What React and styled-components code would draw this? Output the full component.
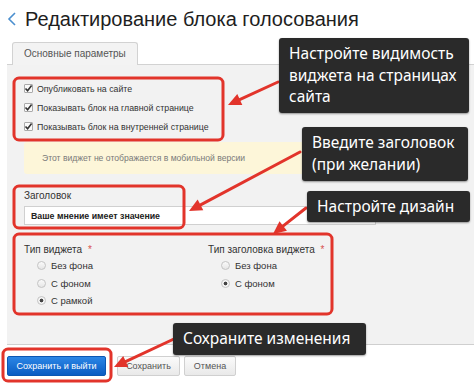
import React from 'react';
import styled, { createGlobalStyle } from 'styled-components';

const GlobalStyle = createGlobalStyle`
  html, body { margin: 0; padding: 0; background: #fff; }
  body { font-family: "Liberation Sans", Arial, sans-serif; }
`;

const RED = '#e2342b';

const checks = [
  'Опубликовать на сайте',
  'Показывать блок на главной странице',
  'Показывать блок на внутренней странице',
];

const boxes = [
  { x: 14, y: 78, w: 209, h: 62 },
  { x: 14, y: 186, w: 170, h: 42 },
  { x: 14, y: 234, w: 318, h: 80 },
  { x: 3, y: 349, w: 108, h: 32 },
];

const arrows = [
  { x1: 278, y1: 82, x2: 228, y2: 105 },
  { x1: 300, y1: 152, x2: 189, y2: 211 },
  { x1: 306, y1: 208, x2: 273, y2: 234 },
  { x1: 176, y1: 338, x2: 114, y2: 367 },
];

const callouts = [
  { x: 279, y: 38, w: 190, h: 75, text: 'Настройте видимость\nвиджета на страницах\nсайта' },
  { x: 302, y: 127, w: 166, h: 54, text: 'Введите заголовок\n(при желании)' },
  { x: 307, y: 191, w: 163, h: 31, text: 'Настройте дизайн' },
  { x: 173, y: 323, w: 193, h: 32, text: 'Сохраните изменения' },
];

function Arrow({ x1, y1, x2, y2 }) {
  const dx = x2 - x1, dy = y2 - y1;
  const len = Math.hypot(dx, dy);
  const ux = dx / len, uy = dy / len;
  const hl = 13, hw = 6;
  const bx = x2 - ux * hl, by = y2 - uy * hl;
  const pts = [
    `${x2},${y2}`,
    `${bx - uy * hw},${by + ux * hw}`,
    `${bx + uy * hw},${by - ux * hw}`,
  ].join(' ');
  return (
    <g>
      <line x1={x1} y1={y1} x2={bx + ux * 2} y2={by + uy * 2} stroke={RED} strokeWidth="3" strokeLinecap="round" />
      <polygon points={pts} fill={RED} />
    </g>
  );
}

function CheckBox() {
  return (
    <Box>
      <svg width="9" height="9" viewBox="0 0 9 9">
        <path d="M1.5 4.5 L3.6 6.8 L7.6 1.6" fill="none" stroke="#333" strokeWidth="1.6" />
      </svg>
    </Box>
  );
}

function Radio({ checked, label }) {
  return (
    <RadioRow>
      <Circle $checked={checked} />
      {label}
    </RadioRow>
  );
}

export default function App() {
  return (
    <Page>
      <GlobalStyle />
      <Header>
        <svg width="10" height="16" viewBox="0 0 10 16">
          <path d="M8 2 L2 8 L8 14" fill="none" stroke="#4b8fcf" strokeWidth="1.6" />
        </svg>
        <Title>Редактирование блока голосования</Title>
      </Header>

      <Main>
        <TabBar>
          <Tab>Основные параметры</Tab>
        </TabBar>
        <Panel>
          <Checks>
            {checks.map((c) => (
              <CheckRow key={c}>
                <CheckBox />
                {c}
              </CheckRow>
            ))}
          </Checks>

          <Notice>Этот виджет не отображается в мобильной версии</Notice>

          <Label>Заголовок</Label>
          <Input>Ваше мнение имеет значение</Input>

          <Design>
            <Column>
              <Label $top={18}>Тип виджета <Req>*</Req></Label>
              <Radio label="Без фона" />
              <Radio label="С фоном" />
              <Radio label="С рамкой" checked />
            </Column>
            <Column>
              <Label $top={18}>Тип заголовка виджета <Req>*</Req></Label>
              <Radio label="Без фона" />
              <Radio label="С фоном" checked />
            </Column>
          </Design>
        </Panel>
      </Main>

      <Footer>
        <Button $primary $w={99}>Сохранить и выйти</Button>
        <Button $w={63} $gap={11}>Сохранить</Button>
        <Button $w={52} $gap={4}>Отмена</Button>
      </Footer>

      <Overlay width="474" height="384" viewBox="0 0 474 384">
        {boxes.map((b, i) => (
          <rect key={i} x={b.x} y={b.y} width={b.w} height={b.h} rx="5" fill="none" stroke={RED} strokeWidth="3" />
        ))}
        {arrows.map((a, i) => <Arrow key={i} {...a} />)}
      </Overlay>

      {callouts.map((c, i) => (
        <Callout key={i} $x={c.x} $y={c.y} $w={c.w} $h={c.h}>
          {c.text}
        </Callout>
      ))}
    </Page>
  );
}

const Page = styled.div`
  position: relative;
  width: 474px;
  height: 384px;
  overflow: hidden;
  background: #fff;
`;

const Header = styled.div`
  display: flex;
  align-items: center;
  gap: 8px;
  height: 38px;
  padding: 0 0 0 7px;
  box-sizing: border-box;
`;

const Title = styled.h1`
  margin: 0;
  font-size: 20px;
  font-weight: normal;
  color: #1e1e1e;
`;

const Main = styled.div`
  margin: 4px 0 0 7px;
`;

const TabBar = styled.div`
  display: flex;
  padding-left: 5px;
`;

const Tab = styled.div`
  position: relative;
  z-index: 1;
  height: 22px;
  line-height: 22px;
  padding: 0 11px;
  font-size: 10px;
  color: #555;
  background: #f3f3f3;
  border: 1px solid #d2d2d2;
  border-bottom: none;
  border-radius: 3px 3px 0 0;
  margin-bottom: -1px;
`;

const Panel = styled.div`
  height: 281px;
  box-sizing: border-box;
  background: #f2f2f2;
  border-top: 1px solid #d2d2d2;
  border-bottom: 1px solid #cfcfcf;
  padding: 14px 6px 0 17px;
`;

const Checks = styled.div`
  display: flex;
  flex-direction: column;
`;

const CheckRow = styled.div`
  display: flex;
  align-items: center;
  gap: 4px;
  height: 19px;
  font-size: 8.8px;
  color: #333;
`;

const Box = styled.span`
  display: inline-flex;
  width: 9px;
  height: 9px;
  border: 1px solid #aaa;
  border-radius: 1px;
  background: #fafafa;
  box-sizing: border-box;
  align-items: center;
  justify-content: center;
  svg { margin: -1px; }
`;

const Notice = styled.div`
  margin-top: 6px;
  height: 32px;
  line-height: 32px;
  padding-left: 18px;
  background: #fdf6d9;
  border-radius: 3px;
  font-size: 8.6px;
  color: #7a7a7a;
`;

const Label = styled.div`
  margin-top: ${({ $top }) => $top ?? 15}px;
  height: 14px;
  line-height: 14px;
  font-size: 10px;
  color: #333;
`;

const Req = styled.span`
  color: #d9534f;
  margin-left: 3px;
`;

const Input = styled.div`
  margin-top: 3px;
  width: 352px;
  height: 19px;
  line-height: 18px;
  box-sizing: border-box;
  padding-left: 6px;
  background: #fff;
  border: 1px solid #d0d0d0;
  font-size: 8.8px;
  font-weight: bold;
  color: #222;
`;

const Design = styled.div`
  display: grid;
  grid-template-columns: 184px auto;
`;

const Column = styled.div`
  display: flex;
  flex-direction: column;
`;

const RadioRow = styled.div`
  display: flex;
  align-items: center;
  gap: 5px;
  height: 17.5px;
  padding-left: 13px;
  font-size: 9.5px;
  color: #333;
`;

const Circle = styled.span`
  width: 9px;
  height: 9px;
  box-sizing: border-box;
  border-radius: 50%;
  border: 1px solid #c4c4c4;
  background: ${({ $checked }) =>
    $checked ? 'radial-gradient(circle, #444 0 1.6px, #f4f4f4 2.2px)' : 'linear-gradient(#fafafa, #e6e6e6)'};
`;

const Footer = styled.div`
  display: flex;
  padding: 11px 0 0 7px;
`;

const Button = styled.div`
  width: ${({ $w }) => $w}px;
  height: 20px;
  line-height: 19px;
  box-sizing: border-box;
  text-align: center;
  margin-left: ${({ $gap }) => $gap || 0}px;
  border-radius: 2px;
  font-size: 9px;
  border: 1px solid ${({ $primary }) => ($primary ? '#0b57b3' : '#d0d0d0')};
  color: ${({ $primary }) => ($primary ? '#fff' : '#555')};
  background: ${({ $primary }) =>
    $primary ? 'linear-gradient(#2b86e6, #0a5cc2)' : 'linear-gradient(#fbfbfb, #e9e9e9)'};
`;

const Overlay = styled.svg`
  position: absolute;
  left: 0;
  top: 0;
  pointer-events: none;
`;

const Callout = styled.div`
  position: absolute;
  left: ${({ $x }) => $x}px;
  top: ${({ $y }) => $y}px;
  width: ${({ $w }) => $w}px;
  height: ${({ $h }) => $h}px;
  box-sizing: border-box;
  padding: 5px 0 0 10px;
  background: #2a2a2a;
  border-radius: 3px;
  box-shadow: 0 1px 2px rgba(0, 0, 0, 0.4);
  color: #fff;
  font-family: "Noto Sans", sans-serif;
  font-size: 15.5px;
  line-height: 21.5px;
  white-space: pre;
  overflow: hidden;
`;
